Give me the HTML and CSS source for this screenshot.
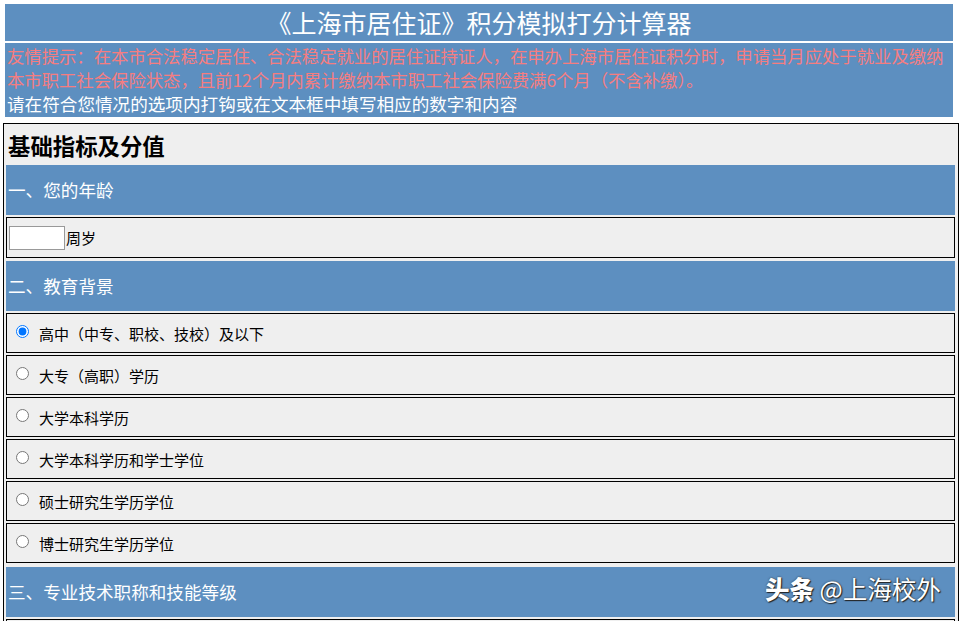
FILE: index.html
```html
<!DOCTYPE html>
<html lang="zh-CN">
<head>
<meta charset="utf-8">
<title>《上海市居住证》积分模拟打分计算器</title>
<link rel="stylesheet" href="styles.css">
</head>
<body>
<div class="top">
  <div class="title">《上海市居住证》积分模拟打分计算器</div>
  <div class="notice">
    <div class="red">友情提示：在本市合法稳定居住、合法稳定就业的居住证持证人，在申办上海市居住证积分时，申请当月应处于就业及缴纳本市职工社会保险状态，且前12个月内累计缴纳本市职工社会保险费满6个月（不含补缴）。</div>
    <div class="white">请在符合您情况的选项内打钩或在文本框中填写相应的数字和内容</div>
  </div>
</div>
<div class="panel">
  <div class="heading">基础指标及分值</div>
  <div class="sec">一、您的年龄</div>
  <div class="row age"><input class="age-input" type="text"><span>周岁</span></div>
  <div class="sec sec2">二、教育背景</div>
  <label class="row"><input type="radio" name="edu" checked><span>高中（中专、职校、技校）及以下</span></label>
  <label class="row"><input type="radio" name="edu"><span>大专（高职）学历</span></label>
  <label class="row"><input type="radio" name="edu"><span>大学本科学历</span></label>
  <label class="row"><input type="radio" name="edu"><span>大学本科学历和学士学位</span></label>
  <label class="row"><input type="radio" name="edu"><span>硕士研究生学历学位</span></label>
  <label class="row"><input type="radio" name="edu"><span>博士研究生学历学位</span></label>
  <div class="sec sec3">三、专业技术职称和技能等级</div>
  <div class="row"></div>
</div>
<div class="watermark"><b>头条</b> @上海校外</div>
</body>
</html>
```
FILE: styles.css
```css
html, body {
  overflow: hidden;
}
body {
  margin: 0;
  padding-top: 4px;
  background: #fff;
  font-family: "Microsoft YaHei", "Noto Sans CJK SC", "Noto Sans", sans-serif;
  color: #000;
  position: relative;
}
.top {
  margin: 0 9px 0 5px;
}
.title {
  background: #5d8fc0;
  color: #fff;
  height: 37px;
  line-height: 37px;
  font-size: 25px;
  text-align: center;
}
.notice {
  margin-top: 2px;
  background: #5d8fc0;
  height: 74px;
  padding: 1px 0 0 2px;
  box-sizing: border-box;
  font-size: 17.4px;
  line-height: 24px;
  letter-spacing: -0.05px;
}
.red {
  color: #f57d80;
}
.white {
  color: #fff;
  font-size: 17.6px;
  letter-spacing: 0;
}
.panel {
  margin: 6px 3px 0 3px;
  border: 1px solid #000;
  background: #efefef;
  padding: 0 3px 0 2px;
  height: 600px;
}
.heading {
  height: 41px;
  line-height: 43px;
  font-size: 22.4px;
  font-weight: bold;
  padding-left: 2px;
}
.sec {
  background: #5d8fc0;
  color: #fff;
  height: 50px;
  line-height: 50px;
  font-size: 17.6px;
  padding-left: 2px;
}
.sec2 {
  margin-top: 3px;
}
.sec3 {
  margin-top: 4px;
}
.row {
  display: flex;
  align-items: center;
  box-sizing: border-box;
  height: 40px;
  margin-top: 2px;
  border: 1px solid #000;
  font-size: 15px;
}
.row.age {
  height: 41px;
}
.age-input {
  box-sizing: border-box;
  width: 56px;
  height: 24px;
  margin: 0 1px 0 2px;
  border: 1px solid #999;
  background: #fff;
  padding: 0;
}
.row input[type="radio"] {
  width: 13px;
  height: 13px;
  margin: 0 10px 4px 9px;
}
.watermark {
  position: absolute;
  left: 765px;
  top: 572px;
  color: #fff;
  font-size: 24.5px;
  line-height: 34px;
  text-shadow: 1px 1px 1px #222, 0 0 2px #333;
  white-space: nowrap;
}
.watermark b {
  font-weight: 900;
}
```
